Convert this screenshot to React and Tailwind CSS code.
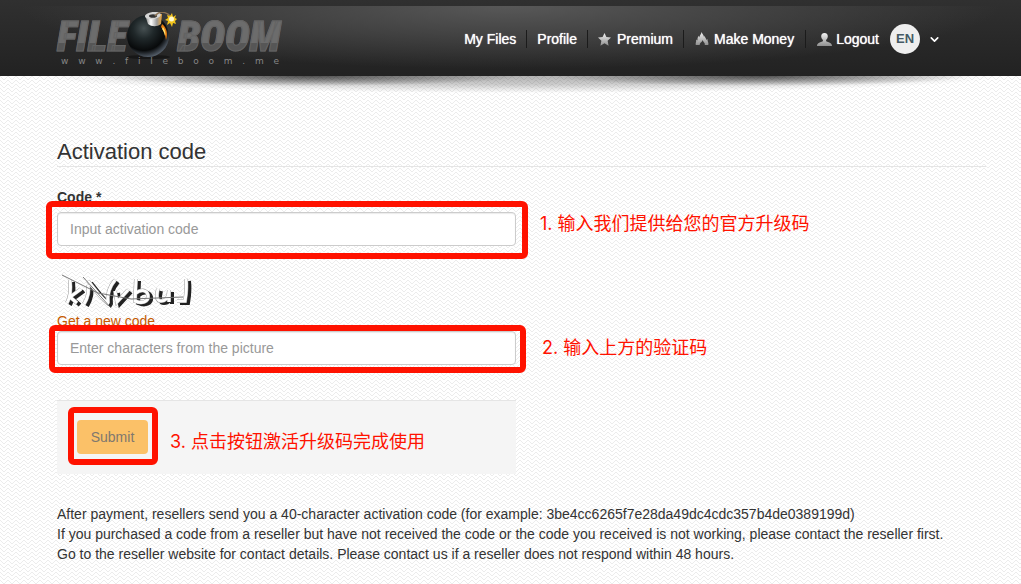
import { ChevronDown } from 'lucide-react';

const sans = 'font-["Liberation_Sans",Arial,sans-serif]';
const inputClass =
  'block h-[34px] w-full rounded border border-[#ccc] bg-white px-3 text-sm text-[#555] placeholder:text-[#999] shadow-[inset_0_1px_1px_rgba(0,0,0,0.08)] outline-none';
const frameClass = 'pointer-events-none absolute rounded-md border-[6px] border-[#ff1200]';
const noteClass =
  'whitespace-nowrap font-["Inter","Noto_Sans_CJK_SC",sans-serif] text-[18px] leading-6 text-[#ff1200]';

function Texture() {
  return (
    <svg className="absolute inset-0 -z-10 h-full w-full" aria-hidden="true">
      <defs>
        <pattern id="weave" width="8" height="8" patternUnits="userSpaceOnUse">
          <path d="M0 0l4 4M0 4l4 4M4 4l4-4M4 8l4-4" stroke="#ececec" strokeWidth="1" fill="none" />
        </pattern>
      </defs>
      <rect width="100%" height="100%" fill="#fff" />
      <rect width="100%" height="100%" fill="url(#weave)" />
    </svg>
  );
}

function Bomb() {
  return (
    <svg width="54" height="50" viewBox="0 0 54 50" className="-ml-2 shrink-0" aria-hidden="true">
      <defs>
        <radialGradient id="ball" cx="40%" cy="32%" r="70%">
          <stop offset="0" stopColor="#465052" />
          <stop offset="0.35" stopColor="#20282a" />
          <stop offset="0.75" stopColor="#080a0b" />
          <stop offset="1" stopColor="#56606c" />
        </radialGradient>
        <linearGradient id="cap" x1="0" x2="1">
          <stop offset="0" stopColor="#777" />
          <stop offset="0.35" stopColor="#fff" />
          <stop offset="0.7" stopColor="#999" />
          <stop offset="1" stopColor="#eda63b" />
        </linearGradient>
      </defs>
      <ellipse cx="25" cy="45" rx="22" ry="2" fill="#111" opacity="0.7" />
      <circle cx="25" cy="24" r="21" fill="url(#ball)" />
      <path d="M39 12c5 4 6 10 4 16-1-6-2-10-5-13z" fill="#e87d10" />
      <path d="M40 15c2 3 3 6 2 9-1-4-2-6-3-7z" fill="#ffe070" />
      <path d="M22 3l3 9c4 3 9 3 13 0l1-10z" fill="url(#cap)" />
      <ellipse cx="30" cy="3.500" rx="8" ry="3.500" fill="#d5d5d5" transform="rotate(-8 30 4)" />
      <ellipse cx="30" cy="4" rx="4" ry="1.800" fill="#333" />
      <path d="M32 4c4-5 11-5 16 1" fill="none" stroke="#8c7254" strokeWidth="1.5" />
      <path d="M49 1l1 4 3-2-1 3 2 1-2 2 1 3-3-1-1 4-2-4-3 2 1-4-3-1 3-2-1-3 3 1z" fill="#f4c51b" />
      <circle cx="48.500" cy="7" r="2.500" fill="#fff9cf" />
    </svg>
  );
}

function Logo() {
  const letters =
    'bg-gradient-to-b from-[#6c6c6c] from-66% to-[#565656] to-66% bg-clip-text pr-1 text-transparent [-webkit-text-stroke:1px_#636363]';
  return (
    <a href="#home" className="flex w-[230px] flex-col">
      <span className='flex h-[46px] items-center pt-2 font-["Liberation_Sans_Narrow","Roboto_Condensed","DejaVu_Sans_Condensed",sans-serif] text-[42px] leading-[38px] font-black italic'>
        <span className={letters}>FILE</span>
        <Bomb />
        <span className={letters}>BOOM</span>
      </span>
      <span className='flex justify-between pr-2 pl-1 font-["DejaVu_Sans",sans-serif] text-[9px] leading-[10px] text-[#858585]'>
        {'www.fileboom.me'.split('').map((char, i) => (
          <span key={i}>{char}</span>
        ))}
      </span>
    </a>
  );
}

function StarIcon() {
  return (
    <svg width="13" height="13" viewBox="0 0 13 13" aria-hidden="true">
      <path d="M6.500 0l1.900 4.100 4.600.5-3.400 3.200 1 4.900-4.100-2.500-4.100 2.500 1-4.900L0 4.600l4.600-.5z" fill="url(#metal)" />
    </svg>
  );
}

function FlameIcon() {
  return (
    <svg width="14" height="14" viewBox="0 0 14 14" aria-hidden="true">
      <path d="M6.500 0c.3 1.500 2.300 2.500 2.500 5l.8-1.200c0 1.700 1.200 2.500 1.700 4.200l1-1c-.3 2.500 1.500 3.500.8 6h-3.600c.8-2-1.200-2.500-2.200-5-.2 2.200-3.200 3-2.700 5H.8C.2 11 1.500 10 1.200 7.500l1.300 1C2.300 6 3 5 3.800 3.800l.7 1.700C4.300 3 6.500 2.500 6.500 0z" fill="url(#metal)" />
    </svg>
  );
}

function UserIcon() {
  return (
    <svg width="15" height="13" viewBox="0 0 15 13" aria-hidden="true">
      <path d="M7.500 0C5.300 0 4 1.500 4.200 3.600c.1 1.600.8 2.700 1.700 3.500v1.200C4 9.200 0 9.700 0 13h15c0-3.300-4-3.800-5.900-4.700V7.100c.9-.8 1.600-1.900 1.700-3.500C11 1.500 9.700 0 7.500 0z" fill="url(#metal)" />
    </svg>
  );
}

const navItems = [
  { label: 'My Files', className: 'pr-[10px]' },
  { label: 'Profile', className: 'px-[10px]' },
  { label: 'Premium', icon: StarIcon, className: 'gap-[6px] px-[10px]' },
  { label: 'Make Money', icon: FlameIcon, className: 'gap-[5px] px-[11px]' },
  { label: 'Logout', icon: UserIcon, className: 'gap-1 px-[11px]' },
];

function Header() {
  return (
    <header className="relative bg-gradient-to-b from-[#303030] to-[#222]">
      <div className="pointer-events-none absolute inset-x-0 top-1.5 bottom-0 bg-[radial-gradient(ellipse_48%_90%_at_50%_0%,#585858_0%,#484848_35%,transparent_100%)]" />
      <svg className="absolute top-full left-0 h-5 w-full" viewBox="0 0 1021 20" preserveAspectRatio="none" aria-hidden="true">
        <defs>
          <radialGradient id="drop" gradientUnits="userSpaceOnUse" cx="0" cy="0" r="1" gradientTransform="translate(520 0) scale(480 17)">
            <stop offset="0" stopColor="#000" stopOpacity="0.3" />
            <stop offset="0.5" stopColor="#000" stopOpacity="0.2" />
            <stop offset="1" stopColor="#000" stopOpacity="0" />
          </radialGradient>
          <radialGradient id="drop-left" gradientUnits="userSpaceOnUse" cx="0" cy="0" r="1" gradientTransform="translate(310 0) scale(210 10)">
            <stop offset="0" stopColor="#000" stopOpacity="0.6" />
            <stop offset="1" stopColor="#000" stopOpacity="0" />
          </radialGradient>
          <radialGradient id="drop-right" gradientUnits="userSpaceOnUse" cx="0" cy="0" r="1" gradientTransform="translate(760 0) scale(210 10)">
            <stop offset="0" stopColor="#000" stopOpacity="0.6" />
            <stop offset="1" stopColor="#000" stopOpacity="0" />
          </radialGradient>
          <linearGradient id="metal" x1="0" y1="0" x2="0" y2="1">
            <stop offset="0" stopColor="#f2f2f2" />
            <stop offset="1" stopColor="#8f8f8f" />
          </linearGradient>
        </defs>
        <rect width="1021" height="20" fill="url(#drop)" />
        <rect width="1021" height="20" fill="url(#drop-left)" />
        <rect width="1021" height="20" fill="url(#drop-right)" />
      </svg>
      <div className="relative flex h-[76px] items-center justify-between pr-20 pl-[57px]">
        <Logo />
        <div className="flex items-center pt-0.5">
          <nav className="flex items-center">
            {navItems.map(({ label, icon: Icon, className }, i) => (
              <a
                key={label}
                href="#nav"
                className={`flex h-[18px] items-center text-sm whitespace-nowrap text-white [text-shadow:0_0_1px_#fff] ${className} ${
                  i < navItems.length - 1 ? 'border-r border-[#1b1b1b]' : ''
                }`}
              >
                {Icon && <Icon />}
                {label}
              </a>
            ))}
          </nav>
          <button type="button" className="flex items-center gap-2 text-white" aria-label="EN">
            <span className="flex size-[30px] items-center justify-center rounded-full bg-[#eee] text-[13px] font-bold text-[#455a64]">
              EN
            </span>
            <ChevronDown size={13} strokeWidth={3} />
          </button>
        </div>
      </div>
    </header>
  );
}

function Captcha() {
  // each letter is a white stroke with a thin outline over a dark offset copy
  const strokes =
    'M13 9c1 9 0 18-3 23M24 18l-11 8 7 6M31 14c2 8-1 14-4 19M31 10c7 8 13 18 21 23M58 9c-6 7-8 15-7 23M58 20l2 11 11-12M79 8l-1 22c7 3 14 1 13-6-1-5-7-6-12-2M101 18c-2 8-1 12 3 12 4 0 8-3 8-11v12M129 8c1 8 0 16-1 22h-8';
  return (
    <svg width="140" height="40" viewBox="0 0 140 40" fill="none" role="img" aria-label="captcha">
      <path d={strokes} stroke="#222" strokeWidth="4" transform="translate(3 2)" />
      <path d={strokes} stroke="#999" strokeWidth="4" />
      <path d={strokes} stroke="#fff" strokeWidth="3" />
      <path d="M5 4l36 18 33 6 52-2M26 6l28 31" stroke="#777" strokeWidth="1" />
    </svg>
  );
}

export default function App() {
  return (
    <div className={`relative isolate min-h-screen text-[#333] ${sans}`}>
      <Texture />
      <Header />
      <main className="pt-[62px] pr-[35px] pb-5 pl-[57px]">
        <h1 className="border-b border-[#e5e5e5] text-[22px] leading-7">Activation code</h1>
        <form className="pt-5" onSubmit={(e) => e.preventDefault()}>
          <label htmlFor="code" className="block text-sm leading-5 font-bold">Code *</label>
          <div className="mt-[5px] flex items-start gap-6">
            <div className="relative w-[459px] shrink-0">
              <input id="code" type="text" placeholder="Input activation code" className={inputClass} />
              <div className={`${frameClass} -top-[11px] -right-3 -bottom-[13px] -left-[11px]`} />
            </div>
            <p className={noteClass}>1. 输入我们提供给您的官方升级码</p>
          </div>
          <div className="mt-[25px]">
            <Captcha />
          </div>
          <a href="#refresh" className="block w-fit text-sm leading-5 text-[#c55a00]">Get a new code</a>
          <div className="flex items-center gap-[26px]">
            <div className="relative w-[459px] shrink-0">
              <input id="captcha" type="text" aria-label="Captcha" placeholder="Enter characters from the picture" className={inputClass} />
              <div className={`${frameClass} -top-1.5 -right-2.5 -bottom-2 -left-2`} />
            </div>
            <p className={noteClass}>2. 输入上方的验证码</p>
          </div>
          <div className="mt-[35px] flex h-[74px] w-[459px] items-start gap-[22px] border-t border-[#e5e5e5] bg-[#f5f5f5] pt-[19px] pl-5">
            <div className="relative">
              <button type="submit" className="block h-[34px] min-w-[71px] rounded bg-[#fbc168] text-sm text-[#80786e]">
                Submit
              </button>
              <div className={`${frameClass} -top-[13px] -right-2.5 -bottom-[11px] -left-[9px]`} />
            </div>
            <p className={`${noteClass} pt-2.5`}>3. 点击按钮激活升级码完成使用</p>
          </div>
        </form>
        <div className="pt-[30px] text-sm leading-5">
          <p>After payment, resellers send you a 40-character activation code (for example: 3be4cc6265f7e28da49dc4cdc357b4de0389199d)</p>
          <p>If you purchased a code from a reseller but have not received the code or the code you received is not working, please contact the reseller first.</p>
          <p>Go to the reseller website for contact details. Please contact us if a reseller does not respond within 48 hours.</p>
        </div>
      </main>
    </div>
  );
}
